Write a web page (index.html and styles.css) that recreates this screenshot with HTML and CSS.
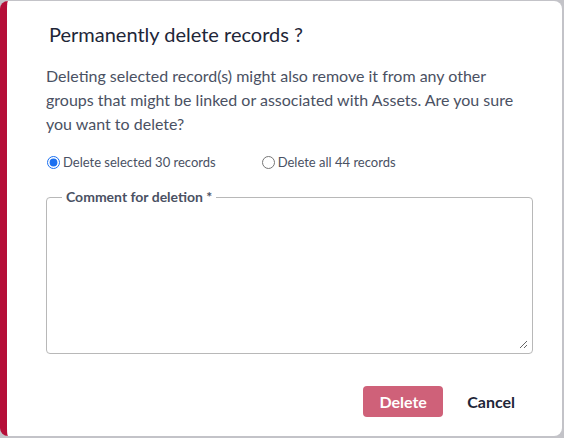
FILE: index.html
```html
<!DOCTYPE html>
<html lang="en">
<head>
<meta charset="utf-8">
<title>Permanently delete records</title>
<link rel="stylesheet" href="styles.css">
</head>
<body>
<div class="dialog">
  <h2 class="title">Permanently delete records ?</h2>
  <p class="message">Deleting selected record(s) might also remove it from any other groups that might be linked or associated with Assets. Are you sure you want to delete?</p>
  <div class="options">
    <label class="option"><input type="radio" name="scope" checked> Delete selected 30 records</label>
    <label class="option"><input type="radio" name="scope"> Delete all 44 records</label>
  </div>
  <fieldset class="comment">
    <legend class="comment-label">Comment for deletion *</legend>
    <textarea class="comment-input"></textarea>
  </fieldset>
  <div class="actions">
    <button class="btn-delete">Delete</button>
    <button class="btn-cancel">Cancel</button>
  </div>
</div>
</body>
</html>
```
FILE: styles.css
```css
html, body {
  margin: 0;
  padding: 0;
}
body {
  background: #c3c3c8;
  width: 564px;
  height: 438px;
  overflow: hidden;
  font-family: Lato, "Noto Sans", sans-serif;
}
.dialog {
  box-sizing: border-box;
  margin-top: 1px;
  width: 562px;
  height: 435px;
  background: #ffffff;
  border-left: 7px solid #b50e38;
  border-radius: 8px;
  padding: 21px 29px 0 39px;
}
.title {
  margin: 0 0 0 3px;
  font-size: 20px;
  line-height: 24px;
  font-weight: 400;
  color: #1e2638;
}
.message {
  margin: 18px 0 0;
  font-size: 16px;
  line-height: 24px;
  color: #4a5163;
}
.options {
  display: flex;
  gap: 45px;
  margin-top: 16px;
  height: 20px;
  align-items: center;
}
.option {
  display: flex;
  align-items: center;
  font-size: 13px;
  color: #4a5163;
}
.option input {
  margin: 0 3px 0 1px;
  width: 13px;
  height: 13px;
  accent-color: #1a6ff0;
}
.comment {
  box-sizing: border-box;
  margin: 17px 0 0;
  padding: 0 4px 4px 8px;
  width: 487px;
  height: 165px;
  border: 1px solid #b8b8b8;
  border-radius: 4px;
  display: flex;
}
.comment-label {
  margin-left: 7px;
  padding: 0 4px;
  font-size: 14px;
  font-weight: 700;
  color: #4a5163;
  line-height: 16px;
}
.comment-input {
  flex: 1;
  border: none;
  outline: none;
  resize: vertical;
  font-family: inherit;
  font-size: 14px;
  padding: 0;
  margin: 0;
  height: auto;
}
.actions {
  display: flex;
  justify-content: flex-end;
  align-items: center;
  gap: 24px;
  margin-top: 32px;
  margin-right: 18px;
}
.btn-delete {
  width: 80px;
  height: 31px;
  border: none;
  border-radius: 4px;
  background: #cf6179;
  color: #ffffff;
  font-family: inherit;
  font-size: 16px;
  font-weight: 700;
}
.btn-cancel {
  border: none;
  background: none;
  padding: 0;
  color: #1e2638;
  font-family: inherit;
  font-size: 16px;
  font-weight: 700;
}
```
